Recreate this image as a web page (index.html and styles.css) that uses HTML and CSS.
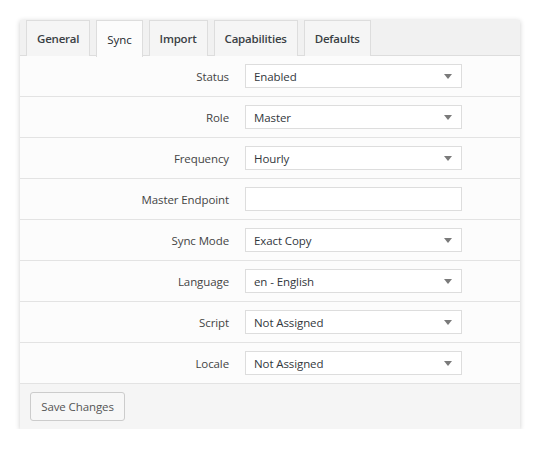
FILE: index.html
```html
<!DOCTYPE html>
<html>
<head>
<meta charset="utf-8">
<link rel="stylesheet" href="styles.css">
</head>
<body>
<div class="panel">
  <div class="tabs">
    <div class="tab">General</div>
    <div class="tab active">Sync</div>
    <div class="tab">Import</div>
    <div class="tab">Capabilities</div>
    <div class="tab">Defaults</div>
  </div>
  <div class="rows">
    <div class="row"><div class="label">Status</div><div class="select">Enabled<span class="arrow"></span></div></div>
    <div class="row"><div class="label">Role</div><div class="select">Master<span class="arrow"></span></div></div>
    <div class="row"><div class="label">Frequency</div><div class="select">Hourly<span class="arrow"></span></div></div>
    <div class="row"><div class="label">Master Endpoint</div><div class="input"></div></div>
    <div class="row"><div class="label">Sync Mode</div><div class="select">Exact Copy<span class="arrow"></span></div></div>
    <div class="row"><div class="label">Language</div><div class="select">en - English<span class="arrow"></span></div></div>
    <div class="row"><div class="label">Script</div><div class="select">Not Assigned<span class="arrow"></span></div></div>
    <div class="row"><div class="label">Locale</div><div class="select">Not Assigned<span class="arrow"></span></div></div>
  </div>
  <div class="footer">
    <button class="btn">Save Changes</button>
  </div>
</div>
</body>
</html>
```
FILE: styles.css
```css
html, body {
  margin: 0;
  padding: 0;
  background: #ffffff;
}
body {
  font-family: "Open Sans", "Noto Sans", sans-serif;
  font-size: 11.5px;
  letter-spacing: -0.1px;
  color: #333;
  padding: 20px 20px 0 20px;
}
.panel {
  width: 500px;
  box-sizing: border-box;
  background: #fcfcfc;
  box-shadow: 0 1px 5px rgba(0,0,0,0.2);
}
.tabs {
  display: flex;
  gap: 6px;
  padding: 0 0 0 6px;
  height: 36px;
  box-sizing: border-box;
  background: #f1f1f1;
  border-bottom: 1px solid #dddddd;
}
.tab {
  box-sizing: border-box;
  height: 36px;
  padding: 0 10px;
  border: 1px solid #dddddd;
  border-bottom: none;
  background: #f5f5f5;
  display: flex;
  align-items: center;
  font-weight: 600;
  color: #3a3f44;
  letter-spacing: -0.2px;
}
.tab.active {
  background: #fcfcfc;
  height: 37px;
  font-weight: 400;
  color: #23282d;
  letter-spacing: -0.1px;
}
.rows {
  display: flex;
  flex-direction: column;
}
.row {
  display: flex;
  align-items: center;
  height: 41px;
  box-sizing: border-box;
  border-bottom: 1px solid #e3e3e3;
}
.label {
  width: 209px;
  text-align: right;
  padding-right: 16px;
  color: #444;
}
.select, .input {
  position: relative;
  width: 217px;
  height: 24px;
  box-sizing: border-box;
  border: 1px solid #dddddd;
  background: #ffffff;
  padding-left: 8px;
  display: flex;
  align-items: center;
  color: #32373c;
}
.arrow {
  position: absolute;
  right: 9px;
  top: 9px;
  width: 0;
  height: 0;
  border-left: 4px solid transparent;
  border-right: 4px solid transparent;
  border-top: 5px solid #7a7a7a;
}
.footer {
  background: #f5f5f5;
  padding: 8px 10px;
  height: 45px;
  box-sizing: border-box;
}
.btn {
  font-family: inherit;
  font-size: 11.5px;
  letter-spacing: -0.1px;
  color: #555;
  background: #f7f7f7;
  border: 1px solid #cccccc;
  border-radius: 3px;
  height: 29px;
  width: 95px;
  padding: 0;
}
```
